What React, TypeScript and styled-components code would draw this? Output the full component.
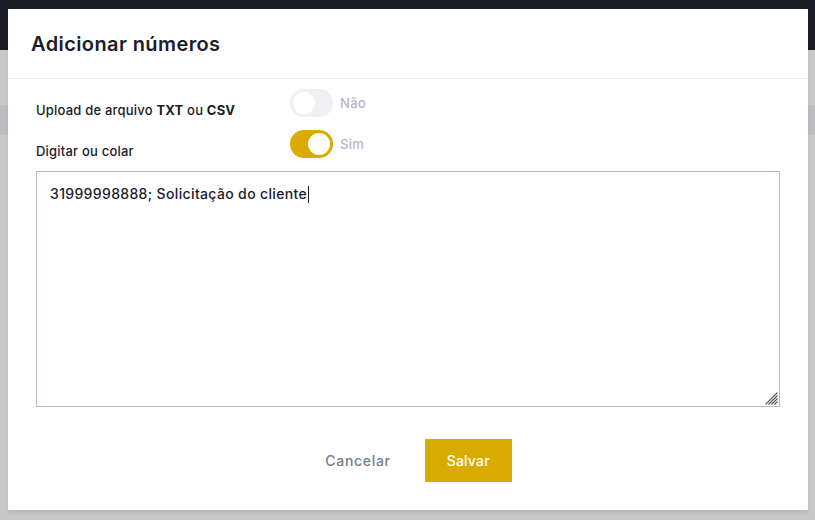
import styled, { createGlobalStyle } from "styled-components";

const GlobalStyle = createGlobalStyle`
  html, body {
    margin: 0;
    padding: 0;
  }
  body {
    font-family: "Inter", "Liberation Sans", sans-serif;
    background: #c8c8c8;
    overflow: hidden;
  }
  * {
    box-sizing: border-box;
  }
`;

const Stage = styled.div`
  position: relative;
  width: 815px;
  height: 520px;
  overflow: hidden;
`;

const TopBar = styled.div`
  height: 50px;
  background: #1c1b28;
`;
const SubBar = styled.div`
  margin-top: 55px;
  height: 30px;
  background: #bcbdc1;
`;

const Modal = styled.div`
  position: absolute;
  left: 8px;
  top: 9px;
  width: 800px;
  height: 501px;
  background: #ffffff;
  box-shadow: 0 3px 3px rgba(0, 0, 0, 0.08);
  display: flex;
  flex-direction: column;
`;

const Header = styled.div`
  height: 70px;
  padding: 0 23px;
  display: flex;
  align-items: center;
  border-bottom: 1px solid #eeeff2;
`;
const Title = styled.h2`
  margin: 0;
  font-size: 20px;
  font-weight: 600;
  color: #1c1b2b;
  letter-spacing: 0.4px;
`;

const Body = styled.div`
  padding: 10px 28px 0 28px;
  display: flex;
  flex-direction: column;
`;

const OptionRow = styled.div`
  display: grid;
  grid-template-columns: 254px auto 1fr;
  align-items: flex-start;
  height: 41px;
`;
const Label = styled.div`
  padding-top: 13px;
  font-size: 13px;
  font-weight: 500;
  letter-spacing: 0.2px;
  color: #1c1b2b;
  b {
    font-weight: 700;
  }
`;
const Switch = styled.div<{ $on: boolean }>`
  position: relative;
  width: 43px;
  height: 28px;
  border-radius: 14px;
  background: ${(p) => (p.$on ? "#dcab00" : "#eef0f4")};
  &::after {
    content: "";
    position: absolute;
    top: 3px;
    left: ${(p) => (p.$on ? "18px" : "3px")};
    width: 22px;
    height: 22px;
    border-radius: 50%;
    background: #ffffff;
  }
`;
const SwitchText = styled.span`
  margin-left: 7px;
  padding-top: 6px;
  font-size: 13px;
  font-weight: 500;
  letter-spacing: 0.3px;
  color: #b6b6c6;
`;

const Editor = styled.div`
  position: relative;
  height: 236px;
  border: 1px solid #b9b9c9;
  padding: 13px 13px;
  font-size: 14px;
  font-weight: 500;
  letter-spacing: 0.35px;
  color: #1c1b2b;
`;
const Caret = styled.span`
  display: inline-block;
  width: 1px;
  height: 17px;
  margin-left: 1px;
  vertical-align: -4px;
  background: #1c1b2b;
`;
const Grip = styled.svg`
  position: absolute;
  right: 1px;
  bottom: 1px;
`;

const Footer = styled.div`
  display: flex;
  justify-content: center;
  align-items: center;
  gap: 34px;
  margin-top: 32px;
  padding-left: 21px;
`;
const GhostButton = styled.button`
  border: none;
  background: none;
  font-family: inherit;
  font-size: 14px;
  font-weight: 500;
  letter-spacing: 0.7px;
  color: #7a7a90;
  padding: 0;
`;
const PrimaryButton = styled.button`
  border: none;
  width: 87px;
  height: 43px;
  background: #d9ab00;
  color: #ffffff;
  font-family: inherit;
  font-size: 14px;
  font-weight: 500;
  letter-spacing: 0.2px;
`;

export default function App(): JSX.Element {
  return (
    <Stage>
      <GlobalStyle />
      <TopBar />
      <SubBar />
      <Modal>
        <Header>
          <Title>Adicionar números</Title>
        </Header>
        <Body>
          <OptionRow>
            <Label>
              Upload de arquivo <b>TXT</b> ou <b>CSV</b>
            </Label>
            <Switch $on={false} />
            <SwitchText>Não</SwitchText>
          </OptionRow>
          <OptionRow>
            <Label>Digitar ou colar</Label>
            <Switch $on />
            <SwitchText>Sim</SwitchText>
          </OptionRow>
          <Editor>
            31999998888; Solicitação do cliente
            <Caret />
            <Grip width="14" height="14" viewBox="0 0 14 14">
              <g stroke="#55555f" strokeWidth="1.1">
                <line x1="13.5" y1="1.5" x2="1.5" y2="13.5" />
                <line x1="13.5" y1="4.5" x2="4.5" y2="13.5" />
                <line x1="13.5" y1="7.5" x2="7.5" y2="13.5" />
                <line x1="13.5" y1="10.5" x2="10.5" y2="13.5" />
              </g>
            </Grip>
          </Editor>
        </Body>
        <Footer>
          <GhostButton>Cancelar</GhostButton>
          <PrimaryButton>Salvar</PrimaryButton>
        </Footer>
      </Modal>
    </Stage>
  );
}
